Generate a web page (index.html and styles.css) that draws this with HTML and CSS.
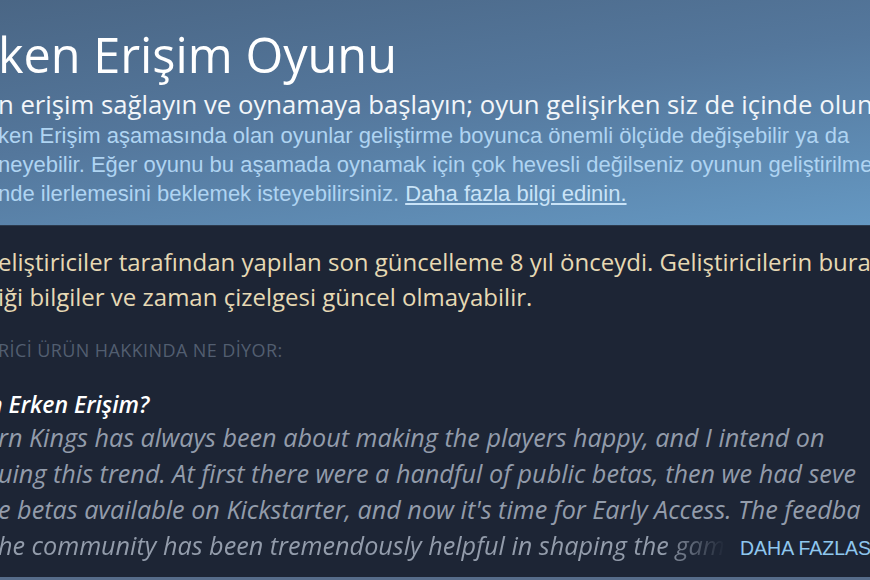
FILE: index.html
```html
<!DOCTYPE html>
<html lang="tr">
<head>
<meta charset="utf-8">
<title>Erken Erişim Oyunu</title>
<link rel="stylesheet" href="styles.css">
</head>
<body>
<div class="ea">
  <div class="ea-header">
    <div class="ea-title">ken Erişim Oyunu</div>
    <div class="ea-sub">n erişim sağlayın ve oynamaya başlayın; oyun gelişirken siz de içinde olun</div>
    <div class="ea-desc">
      <div class="line">ken Erişim aşamasında olan oyunlar geliştirme boyunca önemli ölçüde değişebilir ya da</div>
      <div class="line">neyebilir. Eğer oyunu bu aşamada oynamak için çok hevesli değilseniz oyunun geliştirilme</div>
      <div class="line">nde ilerlemesini beklemek isteyebilirsiniz. <a class="ea-link" href="#">Daha fazla bilgi edinin.</a></div>
    </div>
  </div>
  <div class="ea-body">
    <div class="notice">
      <div class="line">eliştiriciler tarafından yapılan son güncelleme 8 yıl önceydi. Geliştiricilerin bura</div>
      <div class="line">iği bilgiler ve zaman çizelgesi güncel olmayabilir.</div>
    </div>
    <div class="dev-label">RİCİ ÜRÜN HAKKINDA NE DİYOR:</div>
    <div class="question">n Erken Erişim?</div>
    <div class="answer">
      <div class="line">rn Kings has always been about making the players happy, and I intend on</div>
      <div class="line">uing this trend. At first there were a handful of public betas, then we had seve</div>
      <div class="line">e betas available on Kickstarter, and now it's time for Early Access. The feedba</div>
      <div class="line last-line">
        <span class="fade-text">he community has been tremendously helpful in shaping the gam</span>
        <a class="more" href="#">DAHA FAZLASI</a>
      </div>
    </div>
  </div>
</div>
</body>
</html>
```

FILE: styles.css
```css
html, body {
  margin: 0;
  padding: 0;
  width: 870px;
  height: 580px;
  overflow: hidden;
  background: #1d2535;
}

.ea {
  height: 577px;
  border-bottom: 3px solid #566c8a;
  display: flex;
  flex-direction: column;
  overflow: hidden;
}

.line {
  white-space: nowrap;
}

.ea-header {
  padding: 24px 0 17px 0;
  background: linear-gradient(172deg, #4a6685 0%, #54779c 45%, #6598c2 100%);
  border-bottom: 1px solid #2c3a4d;
  margin-left: -2px;
}

.ea-title {
  font-family: "Open Sans", sans-serif;
  font-size: 48.6px;
  line-height: 60px;
  color: #ffffff;
  white-space: nowrap;
}

.ea-sub {
  font-family: "Open Sans", sans-serif;
  font-size: 25.7px;
  line-height: 36px;
  margin-top: 3px;
  color: #f2f6fa;
  white-space: nowrap;
}

.ea-desc {
  font-family: "Liberation Sans", Arial, sans-serif;
  font-size: 22px;
  line-height: 28.8px;
  color: #afd4f2;
  margin-top: -1px;
}

.ea-link {
  color: #c9e3f7;
  text-decoration: underline;
}

.ea-body {
  flex: 1;
  padding-top: 18px;
  margin-left: -2px;
}

.notice {
  font-family: "Open Sans", sans-serif;
  font-size: 24px;
  line-height: 35px;
  color: #e6d9b4;
}

.dev-label {
  font-family: "Open Sans", sans-serif;
  font-size: 18px;
  letter-spacing: 0.4px;
  line-height: 24px;
  margin-top: 24px;
  color: #525e70;
  white-space: nowrap;
}

.question {
  font-family: "Open Sans", sans-serif;
  font-style: italic;
  font-weight: 600;
  font-size: 23px;
  line-height: 30px;
  margin-top: 27px;
  margin-left: -9px;
  color: #ffffff;
  white-space: nowrap;
}

.answer {
  font-family: "Open Sans", sans-serif;
  font-style: italic;
  font-size: 25.2px;
  line-height: 36px;
  color: #939cab;
}

.last-line {
  display: flex;
  align-items: baseline;
}

.fade-text {
  width: 728px;
  flex: none;
  overflow: hidden;
  -webkit-mask-image: linear-gradient(to right, #000 0, #000 665px, transparent 728px);
  mask-image: linear-gradient(to right, #000 0, #000 665px, transparent 728px);
}

.more {
  font-family: "Liberation Sans", Arial, sans-serif;
  font-style: normal;
  font-size: 19.5px;
  color: #8fc7ee;
  text-decoration: none;
  margin-left: 14px;
}
```
